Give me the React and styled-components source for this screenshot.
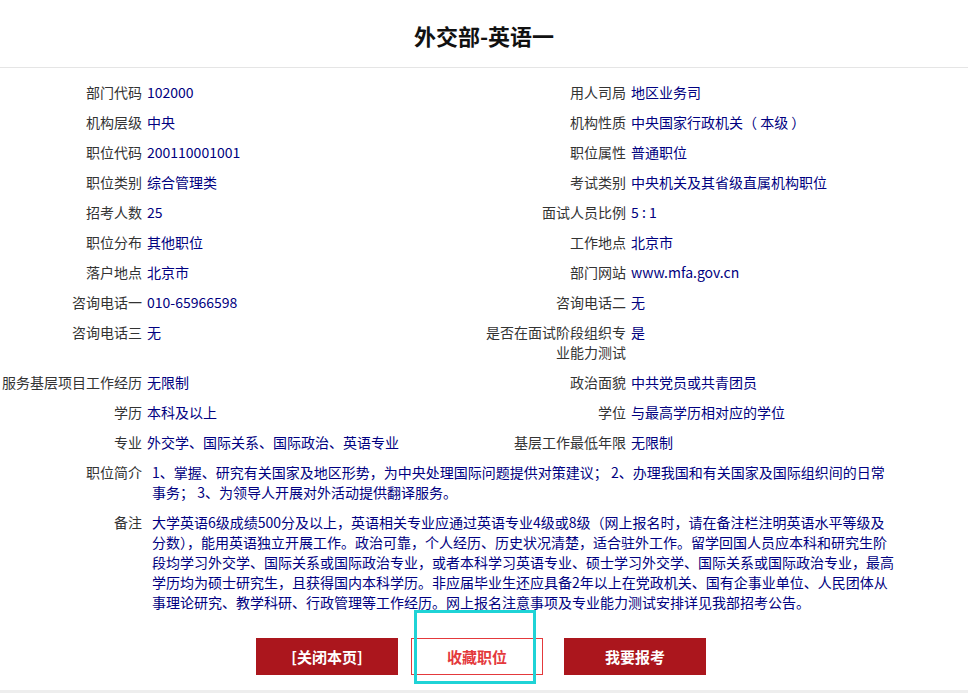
import React from "react"
import styled, { createGlobalStyle } from "styled-components"

const red = "#ab161d"
const lightRed = "#e4393c"
const navy = "#000080"
const labelGrey = "#333"

const GlobalStyle = createGlobalStyle`
  html, body {
    margin: 0;
    padding: 0;
    background: #eeeeee;
  }
  body {
    font-family: "Noto Sans CJK SC", "Noto Sans", sans-serif;
  }
`

const Page = styled.div`
  width: 968px;
  background: #fff;
  padding-bottom: 15px;
`

const Header = styled.header`
  padding: 20px 0 17px;
  border-bottom: 1px solid #e5e5e5;
  text-align: center;

  h1 {
    margin: 0;
    font-size: 22px;
    line-height: 30px;
    font-weight: bold;
    color: #111;
  }
`

const InfoGrid = styled.section`
  display: grid;
  grid-template-columns: 484px 484px;
  padding-top: 9px;
`

const Item = styled.div`
  display: flex;
  align-items: flex-start;
  padding: 5px 0;
  font-size: 14px;
  line-height: 20px;
  grid-column: ${(p) => (p.$wide ? "1 / span 2" : "auto")};
`

const Label = styled.div`
  flex: 0 0 142px;
  text-align: right;
  color: ${labelGrey};
`

const Value = styled.div`
  margin-left: ${(p) => (p.$wide ? "10px" : "5px")};
  color: ${navy};
  white-space: ${(p) => (p.$wide ? "nowrap" : "normal")};
`

const Actions = styled.div`
  display: flex;
  justify-content: center;
  padding-right: 6px;
  margin-top: 21px;
`

const Button = styled.button`
  position: relative;
  box-sizing: border-box;
  width: ${(p) => (p.$outline ? "132px" : "142px")};
  height: 37px;
  margin-left: ${(p) => p.$offset || 0}px;
  border: 1px solid ${(p) => (p.$outline ? lightRed : red)};
  background: ${(p) => (p.$outline ? "#fff" : red)};
  color: ${(p) => (p.$outline ? lightRed : "#fff")};
  font-family: "Noto Sans CJK SC", sans-serif;
  font-size: 15px;
  font-weight: bold;
  cursor: pointer;
`

const FocusRing = styled.span`
  position: absolute;
  left: 2px;
  top: -29px;
  width: 122px;
  height: 74px;
  box-sizing: border-box;
  border: 3px solid #1fd3d6;
  pointer-events: none;
`

const fields = [
  ["部门代码", "102000", "用人司局", "地区业务司"],
  ["机构层级", "中央", "机构性质", "中央国家行政机关（ 本级 ）"],
  ["职位代码", "200110001001", "职位属性", "普通职位"],
  ["职位类别", "综合管理类", "考试类别", "中央机关及其省级直属机构职位"],
  ["招考人数", "25", "面试人员比例", "5 : 1"],
  ["职位分布", "其他职位", "工作地点", "北京市"],
  ["落户地点", "北京市", "部门网站", "www.mfa.gov.cn"],
  ["咨询电话一", "010-65966598", "咨询电话二", "无"],
  ["咨询电话三", "无", "是否在面试阶段组织专业能力测试", "是"],
  ["服务基层项目工作经历", "无限制", "政治面貌", "中共党员或共青团员"],
  ["学历", "本科及以上", "学位", "与最高学历相对应的学位"],
  ["专业", "外交学、国际关系、国际政治、英语专业", "基层工作最低年限", "无限制"],
]

const intro = [
  "1、掌握、研究有关国家及地区形势，为中央处理国际问题提供对策建议； 2、办理我国和有关国家及国际组织间的日常",
  "事务； 3、为领导人开展对外活动提供翻译服务。",
]

const remarks = [
  "大学英语6级成绩500分及以上，英语相关专业应通过英语专业4级或8级（网上报名时，请在备注栏注明英语水平等级及",
  "分数），能用英语独立开展工作。政治可靠，个人经历、历史状况清楚，适合驻外工作。留学回国人员应本科和研究生阶",
  "段均学习外交学、国际关系或国际政治专业，或者本科学习英语专业、硕士学习外交学、国际关系或国际政治专业，最高",
  "学历均为硕士研究生，且获得国内本科学历。非应届毕业生还应具备2年以上在党政机关、国有企事业单位、人民团体从",
  "事理论研究、教学科研、行政管理等工作经历。网上报名注意事项及专业能力测试安排详见我部招考公告。",
]

const Lines = ({ lines }) =>
  lines.map((line, i) => (
    <React.Fragment key={i}>
      {line}
      {i < lines.length - 1 && <br />}
    </React.Fragment>
  ))

export default function App() {
  return (
    <Page>
      <GlobalStyle />
      <Header>
        <h1>外交部-英语一</h1>
      </Header>

      <InfoGrid>
        {fields.map(([l1, v1, l2, v2]) => (
          <React.Fragment key={l1}>
            <Item>
              <Label>{l1}</Label>
              <Value>{v1}</Value>
            </Item>
            <Item>
              <Label>{l2}</Label>
              <Value>{v2}</Value>
            </Item>
          </React.Fragment>
        ))}
        <Item $wide>
          <Label>职位简介</Label>
          <Value $wide>
            <Lines lines={intro} />
          </Value>
        </Item>
        <Item $wide>
          <Label>备注</Label>
          <Value $wide>
            <Lines lines={remarks} />
          </Value>
        </Item>
      </InfoGrid>

      <Actions>
        <Button>[关闭本页]</Button>
        <Button $outline $offset={13}>
          收藏职位
          <FocusRing />
        </Button>
        <Button $offset={21}>我要报考</Button>
      </Actions>
    </Page>
  )
}
